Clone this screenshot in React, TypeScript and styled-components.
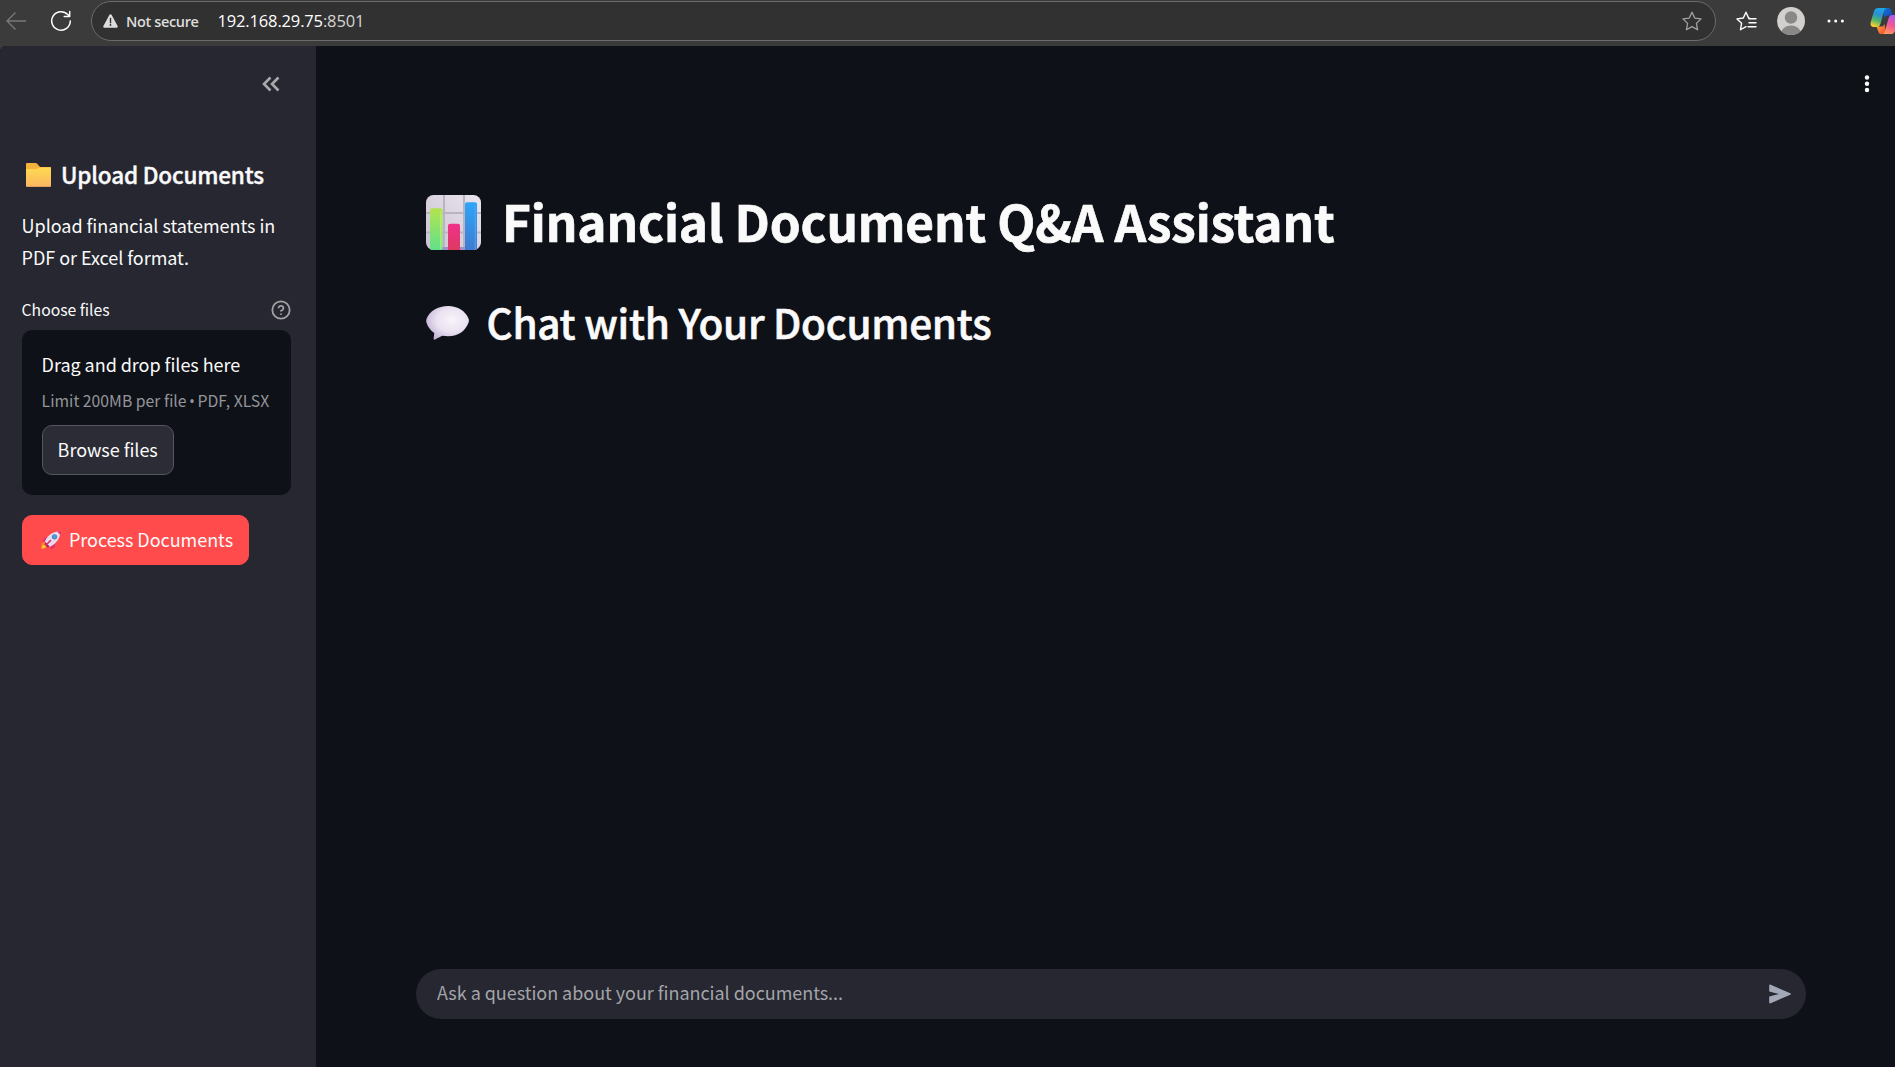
import React from "react";
import styled, { createGlobalStyle } from "styled-components";

const SANS = '"Noto Sans CJK SC", "Noto Sans", sans-serif';
const CHROME = '"Open Sans", "Noto Sans", sans-serif';

const GlobalStyle = createGlobalStyle`
  * { box-sizing: border-box; }
  html, body { margin: 0; padding: 0; background: #0e1117; }
  body { font-family: ${SANS}; color: #fafafa; overflow: hidden; }
  svg { display: block; flex: none; }
  button, input { font: inherit; color: inherit; margin: 0; }
`;

const Window = styled.div`
  display: flex;
  flex-direction: column;
  width: 100%;
  height: 100vh;
  background: #3b3b3b;
`;

const Toolbar = styled.header`
  display: flex;
  align-items: flex-start;
  height: 46px;
  flex: none;
  padding: 1px 0 0 4px;
  overflow: hidden;
  font-family: ${CHROME};
`;

const ToolButton = styled.span<{ $w: number; $gap?: number }>`
  display: flex;
  align-items: center;
  justify-content: center;
  flex: none;
  width: ${(p) => p.$w}px;
  height: 40px;
  margin-left: ${(p) => p.$gap ?? 0}px;
`;

const AddressBar = styled.div`
  display: flex;
  align-items: center;
  width: 1625px;
  height: 40px;
  flex: none;
  margin-left: 18px;
  padding: 0 13px 0 11px;
  border: 1px solid #6b6b6b;
  border-radius: 20px;
  background: #313131;
`;

const NotSecure = styled.span`
  margin: 1px 0 0 8px;
  width: 73px;
  font-size: 14.5px;
  font-weight: 600;
  line-height: 20px;
  letter-spacing: -0.36px;
  white-space: nowrap;
  color: #dcdcdc;
`;

const Url = styled.span`
  flex: 1;
  margin-left: 18.500px;
  font-size: 16.5px;
  line-height: 20px;
  letter-spacing: -0.15px;
  color: #fff;
`;

const Port = styled.span`
  color: #d6d6d6;
`;

const Page = styled.div`
  display: flex;
  flex: 1;
  min-height: 0;
  border-top-left-radius: 6px;
  overflow: hidden;
  background: #0e1117;
`;

const Sidebar = styled.aside`
  display: flex;
  flex-direction: column;
  align-items: stretch;
  width: 316px;
  flex: none;
  padding: 26px 25px 0 22px;
  background: #262730;
`;

const SidebarTop = styled.div`
  display: flex;
  justify-content: flex-end;
  height: 87px;
  padding-right: 10px;
`;

const SidebarTitle = styled.h3`
  display: flex;
  align-items: center;
  gap: 10px;
  margin: 0;
  padding-left: 4px;
  font-size: 22.5px;
  font-weight: 500;
  line-height: 30px;
  letter-spacing: -0.18px;
  -webkit-text-stroke: 0.4px currentColor;
  svg { margin-top: 2px; }
`;

const Intro = styled.p`
  margin: 20px -10px 22px -0.400px;
  font-size: 18px;
  line-height: 32px;
  letter-spacing: -0.04px;
`;

const LabelRow = styled.div`
  display: flex;
  align-items: center;
  justify-content: space-between;
  height: 28px;
  margin-left: -0.400px;
  font-size: 15.75px;
  letter-spacing: -0.04px;
  svg { margin-top: 2px; }
`;

const Dropzone = styled.section`
  display: flex;
  flex-direction: column;
  align-items: flex-start;
  height: 165px;
  margin-top: 7px;
  padding: 18px 0 20px 20px;
  border-radius: 10px;
  background: #0e1117;
`;

const DropText = styled.span`
  margin-left: -0.400px;
  font-size: 18px;
  line-height: 32px;
  letter-spacing: -0.04px;
`;

const DropHint = styled.span`
  margin: 9px 0 0 -0.400px;
  font-size: 15.75px;
  line-height: 24px;
  white-space: nowrap;
  color: #94959a;
`;

const Bullet = styled.span`
  font-family: "Open Sans", sans-serif;
  margin: 0 -1px;
`;

const Button = styled.button<{ $primary?: boolean }>`
  display: flex;
  align-items: center;
  gap: 7px;
  width: ${(p) => (p.$primary ? 227 : 132)}px;
  height: 50px;
  flex: none;
  margin-top: ${(p) => (p.$primary ? 20 : 12)}px;
  padding: 0 0 3px ${(p) => (p.$primary ? 18 : 14.6)}px;
  border: 1px solid ${(p) => (p.$primary ? "#ff4b4b" : "#55565e")};
  border-radius: 10px;
  background: ${(p) => (p.$primary ? "#ff4b4b" : "#2b2c36")};
  font-size: 18px;
  line-height: 30px;
  letter-spacing: -0.04px;
  white-space: nowrap;
  svg { margin-top: 2px; }
`;

const Main = styled.main`
  display: flex;
  flex-direction: column;
  flex: 1;
  min-width: 0;
  padding: 26px 16.500px 48px 100px;
`;

const MenuRow = styled.div`
  display: flex;
  justify-content: flex-end;
  height: 116px;
`;

const Title = styled.h1`
  display: flex;
  align-items: center;
  gap: 21px;
  margin: 0;
  padding-left: 10px;
  font-size: 49.5px;
  font-weight: 700;
  line-height: 66px;
  letter-spacing: -0.15px;
  -webkit-text-stroke: 0.7px currentColor;
  svg { margin-top: 2px; }
`;

const Subtitle = styled.h2`
  display: flex;
  align-items: center;
  gap: 17px;
  margin: 41px 0 0;
  padding-left: 9.500px;
  font-size: 40.5px;
  font-weight: 500;
  line-height: 54px;
  letter-spacing: -0.27px;
  -webkit-text-stroke: 0.6px currentColor;
  svg { margin-top: 1px; }
`;

const ChatBox = styled.form`
  display: flex;
  align-items: center;
  width: 1390px;
  height: 50px;
  margin-top: auto;
  padding: 0 14px 0 21px;
  border-radius: 25px;
  background: #262730;
`;

const ChatInput = styled.input`
  flex: 1;
  height: 48px;
  padding: 0 0 5px;
  border: 0;
  outline: 0;
  background: transparent;
  font-size: 18px;
  letter-spacing: -0.04px;
  &::placeholder { color: #a3a4aa; opacity: 1; }
`;

const BackIcon = () => (
  <svg width="22" height="20" viewBox="0 0 22 20" fill="none" stroke="#7a7a7a" strokeWidth="1.3">
    <path d="M21 10H2M10.5 1.5 2 10l8.500 8.500" />
  </svg>
);

const ReloadIcon = () => (
  <svg width="22" height="22" viewBox="0 0 22 22" fill="none" stroke="#fff" strokeWidth="1.5" strokeLinecap="round" strokeLinejoin="round">
    <path d="M20.300 11A9.300 9.300 0 1 1 17.800 4.600L19.500 6.400M19.700 1.500V6.500H14.200" />
  </svg>
);

const WarningIcon = () => (
  <svg width="15" height="14" viewBox="0 0 15 14">
    <path d="M7.500.3c.5 0 .9.2 1.200.7l5.900 10.900c.5.9-.1 1.900-1.100 1.900h-12c-1 0-1.600-1-1.100-1.900L6.300 1c.3-.5.7-.7 1.200-.7Z" fill="#dcdcdc" />
    <path d="M7.500 4.500v4.200" stroke="#313131" strokeWidth="1.400" strokeLinecap="round" />
    <circle cx="7.500" cy="11" r=".9" fill="#313131" />
  </svg>
);

const STAR = "M10 1.200l2.750 5.850 6.250.85-4.600 4.450 1.150 6.400L10 15.650 4.450 18.750l1.150-6.400L1 7.900l6.250-.85Z";

const StarIcon = () => (
  <svg width="20" height="20" viewBox="0 0 20 20" fill="none" stroke="#a2a2a2" strokeWidth="1.300" strokeLinejoin="round">
    <path d={STAR} />
  </svg>
);

const FavoritesIcon = () => (
  <svg width="21" height="20" viewBox="0 0 21 20" fill="none" stroke="#fff" strokeWidth="1.400" strokeLinecap="round" strokeLinejoin="round">
    <path d="M13.500 7.300h-.8L10 1.200 7.300 7.050 1 7.900l4.600 4.450-1.150 6.400L10 15.650" />
    <path d="M13 7.700h7M13 11.700h7M12 15.700h8" />
  </svg>
);

const AvatarIcon = () => (
  <svg width="28" height="28" viewBox="0 0 28 28">
    <clipPath id="avatar"><circle cx="14" cy="14" r="14" /></clipPath>
    <g clipPath="url(#avatar)">
      <rect width="28" height="28" fill="#d2d0ce" />
      <circle cx="14" cy="10.500" r="6.200" fill="#8a8886" />
      <ellipse cx="14" cy="26" rx="9.800" ry="7.500" fill="#8a8886" />
    </g>
  </svg>
);

const EllipsisIcon = () => (
  <svg width="18" height="4" viewBox="0 0 18 4" fill="#fff">
    <circle cx="2" cy="2" r="1.500" /><circle cx="8.700" cy="2" r="1.500" /><circle cx="15.400" cy="2" r="1.500" />
  </svg>
);

const CopilotIcon = () => (
  <svg width="29" height="26" viewBox="0 0 29 26">
    <defs>
      <linearGradient id="cpA" x1=".6" y1="0" x2=".3" y2="1">
        <stop offset="0" stopColor="#1aa7e8" /><stop offset=".35" stopColor="#2a8fd0" />
        <stop offset=".65" stopColor="#4fb56a" /><stop offset="1" stopColor="#ffd02c" />
      </linearGradient>
      <linearGradient id="cpB" x1=".7" y1="0" x2=".3" y2="1">
        <stop offset="0" stopColor="#a45cf0" /><stop offset=".5" stopColor="#f0569a" /><stop offset="1" stopColor="#ff9a5c" />
      </linearGradient>
      <linearGradient id="cpC" x1="0" y1="0" x2="1" y2="1">
        <stop offset="0" stopColor="#1277d8" /><stop offset="1" stopColor="#1a3fb4" />
      </linearGradient>
      <linearGradient id="cpD" x1="0" y1="0" x2="1" y2="1">
        <stop offset="0" stopColor="#ffb03a" /><stop offset="1" stopColor="#f0452e" />
      </linearGradient>
    </defs>
    <path d="M13 0h5c1.800 0 2.700 1 3.200 2.600L22.700 7.500H18c-2 0-2.800.8-3.400 2.800Z" fill="url(#cpC)" />
    <path d="M16 26h-4.500c-1.800 0-2.700-1-3.200-2.600L6.500 18.500H11c2 0 2.800-.8 3.400-2.800Z" fill="url(#cpD)" />
    <path d="M8 0h8.500c-1.400.3-2 1.500-2.500 3.200L10.500 15.500C9.800 18 8.800 19 6.500 19H4C1 19 0 16.800.8 14L3.700 4C4.500 1.300 5.700 0 8 0Z" fill="url(#cpA)" />
    <path d="M21 26h-8.500c1.400-.3 2-1.500 2.500-3.200l3.500-12.300C19.200 8 20.200 7 22.500 7H25c3 0 4 2.200 3.200 5L25.300 22c-.8 2.700-2 4-4.300 4Z" fill="url(#cpB)" />
  </svg>
);

const CollapseIcon = () => (
  <svg width="20" height="24" viewBox="0 0 20 24" fill="none" stroke="#a9a9ad" strokeWidth="2.600">
    <path d="M9.500 5.500 3 12l6.500 6.500M17.500 5.500 11 12l6.500 6.500" />
  </svg>
);

const KebabIcon = () => (
  <svg width="24" height="24" viewBox="0 0 24 24" fill="#fafafa">
    <circle cx="12" cy="5.500" r="2.200" /><circle cx="12" cy="11.800" r="2.200" /><circle cx="12" cy="18" r="2.200" />
  </svg>
);

const HelpIcon = () => (
  <svg width="20" height="20" viewBox="0 0 24 24" fill="none" stroke="#a3a3a7" strokeWidth="2.100" strokeLinecap="round" strokeLinejoin="round">
    <circle cx="12" cy="12" r="10.400" />
    <path d="M9.090 9a3 3 0 0 1 5.830 1c0 2-3 3-3 3M12 17h.01" />
  </svg>
);

const SendIcon = () => (
  <svg width="24" height="20" viewBox="0 0 24 20" fill="#a3a8b8">
    <path d="M1.200 1.600C1.200.7 1.900.4 2.600.7L22.300 9.200c.8.400.8 1.200 0 1.600L2.600 19.300c-.7.3-1.400 0-1.400-.9V13.300c0-.5.300-.9.800-1L11 10 2 7.700c-.5-.1-.8-.5-.8-1Z" />
  </svg>
);

const FolderIcon = () => (
  <svg width="25" height="24" viewBox="0 0 25 24">
    <defs>
      <linearGradient id="fold" x1="0" y1="0" x2="0" y2="1">
        <stop offset="0" stopColor="#ffd84f" /><stop offset=".35" stopColor="#fdce55" /><stop offset="1" stopColor="#fbb463" />
      </linearGradient>
    </defs>
    <path d="M0 1.200C0 .5.500 0 1.200 0h8.300c.6 0 1.100.2 1.500.6L14 4H24c.6 0 1 .4 1 1v8H0Z" fill="#f4b23c" />
    <path d="M0 6h10.500c.7 0 1.300-.3 1.800-.8L13.500 4.500H25V22.800c0 .7-.5 1.200-1.200 1.200H1.200C.5 24 0 23.500 0 22.800Z" fill="url(#fold)" />
    <path d="M.5 23.500h24" stroke="#d99a5a" strokeWidth=".8" />
  </svg>
);

const RocketIcon = () => (
  <svg width="21" height="20" viewBox="0 0 21 20">
    <path d="M1 13.500c1.500-2 3.500-2.200 5-.8s1.300 3.500-.5 4.800C4 18.600 2 18.300.3 19.300.1 17.300 0 15 1 13.500Z" fill="#ff8a1f" />
    <path d="M1.500 16c1-1.300 2-1.300 2.800-.6s.6 1.800-.5 2.400c-.9.500-2 .5-3 .9 0-1 .1-2 .7-2.700Z" fill="#ffc83d" />
    <path d="M8 6.500 3.800 7.700C2.500 8.500 2 10.500 1.800 12l4.500-.5ZM14.500 12l-.6 4.500c-.7 1.500-2.400 2.400-4 2.800L9 14.500Z" fill="#e0316f" />
    <path d="M3.800 12C5.500 6.500 10.500 1.500 19.500 1 19.500 8.500 14.500 14.500 8.700 16.900Z" fill="#e4dcec" />
    <path d="M16 1.500c1.300-.4 2.700-.6 4-.6.1 1.400-.1 2.700-.5 4Z" fill="#e0316f" />
    <path d="M4.300 12 8.700 16.400 6.500 17.500 3.300 14.300Z" fill="#b51e5a" />
    <path d="M5.500 14.500 9.500 10.700" stroke="#e0316f" strokeWidth="1.700" strokeLinecap="round" />
    <circle cx="13.500" cy="6.800" r="2.600" fill="#6a6f9c" />
    <circle cx="13.600" cy="6.700" r="1.900" fill="#35a5f3" />
  </svg>
);

const ChartIcon = () => (
  <svg width="55" height="55" viewBox="0 0 55 55">
    <defs>
      <linearGradient id="chG" x1="0" y1="0" x2="0" y2="1"><stop offset="0" stopColor="#b4e34f" /><stop offset="1" stopColor="#62e08c" /></linearGradient>
      <linearGradient id="chR" x1="0" y1="0" x2="0" y2="1"><stop offset="0" stopColor="#f0318a" /><stop offset="1" stopColor="#dc3a63" /></linearGradient>
      <linearGradient id="chB" x1="0" y1="0" x2="0" y2="1"><stop offset="0" stopColor="#2ea6f8" /><stop offset="1" stopColor="#3f7bd0" /></linearGradient>
      <linearGradient id="chBg" x1="0" y1="1" x2="1" y2="0"><stop offset="0" stopColor="#cbc3d4" /><stop offset=".5" stopColor="#d9d3df" /><stop offset="1" stopColor="#eae5ee" /></linearGradient>
      <clipPath id="chClip"><rect width="55" height="55" rx="7.500" /></clipPath>
    </defs>
    <g clipPath="url(#chClip)">
      <rect width="55" height="55" fill="url(#chBg)" />
      <path d="M18 0v55M38 0v55M0 18h55M0 37.500h55" stroke="#bbb3c3" strokeWidth="2" />
      <path d="M16 53.500h6M34 53.500h5M52 53.500h3" stroke="#a58fc8" strokeWidth="3" />
      <path d="M4 55V15.500C4 14 5 13.200 6.200 13.200h8.100c1.300 0 2.200.8 2.200 2.300V55Z" fill="url(#chG)" />
      <path d="M22 55V31c0-1.500 1-2.300 2.200-2.300h7.600c1.300 0 2.200.8 2.200 2.300v24Z" fill="url(#chR)" />
      <path d="M39 55V9.500C39 8 40 7.200 41.200 7.200h7.600c1.300 0 2.200.8 2.200 2.300V55Z" fill="url(#chB)" />
      <path d="M14.800 16v38" stroke="#c6f56c" strokeOpacity=".6" strokeWidth="1.500" />
      <path d="M49.300 10v44" stroke="#55a8f5" strokeOpacity=".6" strokeWidth="1.500" />
    </g>
  </svg>
);

const SpeechIcon = () => (
  <svg width="44" height="34" viewBox="0 0 44 34">
    <defs>
      <radialGradient id="sp" cx=".6" cy=".42" r=".65">
        <stop offset="0" stopColor="#f8f4fb" /><stop offset=".55" stopColor="#eae2f1" /><stop offset="1" stopColor="#c3b3d6" />
      </radialGradient>
    </defs>
    <path d="M22 0c10 0 17.500 5 20.500 12.500.6 1.500.6 2.800 0 4.300C39.500 24.500 33 30.300 22 30.300c-2 0-4-.2-5.800-.5L9 33.500c-.7.4-1.500 0-1.400-.9L8.300 27C4.500 24.500 2 21 .6 17c-.5-1.500-.5-2.800 0-4.300C3.500 5 12 0 22 0Z" fill="url(#sp)" />
  </svg>
);

export default function App() {
  return (
    <Window>
      <GlobalStyle />
      <Toolbar>
        <ToolButton $w={24}><BackIcon /></ToolButton>
        <ToolButton $w={24} $gap={21}><ReloadIcon /></ToolButton>
        <AddressBar>
          <WarningIcon />
          <NotSecure>Not secure</NotSecure>
          <Url>192.168.29.75<Port>:8501</Port></Url>
          <StarIcon />
        </AddressBar>
        <ToolButton $w={21} $gap={20}><FavoritesIcon /></ToolButton>
        <ToolButton $w={28} $gap={20}><AvatarIcon /></ToolButton>
        <ToolButton $w={18} $gap={22}><EllipsisIcon /></ToolButton>
        <ToolButton $w={29} $gap={25}><CopilotIcon /></ToolButton>
      </Toolbar>
      <Page>
        <Sidebar>
          <SidebarTop><CollapseIcon /></SidebarTop>
          <SidebarTitle><FolderIcon /><span>Upload Documents</span></SidebarTitle>
          <Intro>Upload financial statements in<br />PDF or Excel format.</Intro>
          <LabelRow><span>Choose files</span><HelpIcon /></LabelRow>
          <Dropzone>
            <DropText>Drag and drop files here</DropText>
            <DropHint>Limit 200MB per file <Bullet>•</Bullet> PDF, XLSX</DropHint>
            <Button type="button">Browse files</Button>
          </Dropzone>
          <Button type="button" $primary><RocketIcon /><span>Process Documents</span></Button>
        </Sidebar>
        <Main>
          <MenuRow><KebabIcon /></MenuRow>
          <Title><ChartIcon /><span>Financial Document Q&amp;A Assistant</span></Title>
          <Subtitle><SpeechIcon /><span>Chat with Your Documents</span></Subtitle>
          <ChatBox>
            <ChatInput placeholder="Ask a question about your financial documents..." />
            <SendIcon />
          </ChatBox>
        </Main>
      </Page>
    </Window>
  );
}
